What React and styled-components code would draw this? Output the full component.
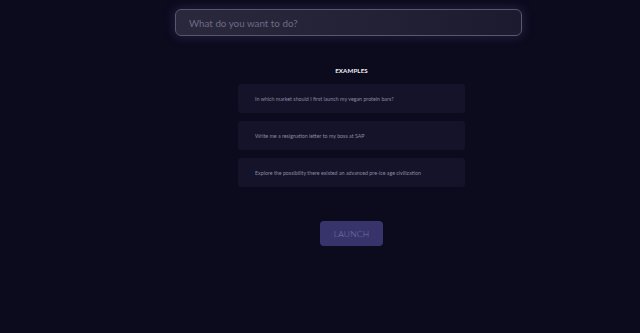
import React from "react";
import styled, { createGlobalStyle } from "styled-components";

const GlobalStyle = createGlobalStyle`
  html, body {
    margin: 0;
    padding: 0;
    background: #0c0a1d;
  }
  body {
    font-family: Lato, "Open Sans", "Liberation Sans", sans-serif;
  }
`;

const Page = styled.div`
  width: 640px;
  height: 333px;
  background: #0c0a1d;
  display: flex;
  flex-direction: column;
  align-items: center;
  padding-left: 63px;
  padding-top: 9px;
  box-sizing: border-box;
`;

const Prompt = styled.input`
  width: 347px;
  height: 27px;
  box-sizing: border-box;
  margin-left: -6px;
  border: 1px solid #59566f;
  border-radius: 6px;
  background: linear-gradient(90deg, #2a283d 0%, #232136 60%, #1c1a2f 100%);
  box-shadow: 0 0 10px 2px rgba(70, 64, 120, 0.35);
  padding: 0 13px;
  font-family: Lato, "Open Sans", sans-serif;
  font-size: 9.8px;
  color: #c8c6d8;
  outline: none;

  &::placeholder {
    color: #6e6b84;
  }
`;

const Title = styled.div`
  margin-top: 31px;
  font-size: 6.2px;
  line-height: 8px;
  font-weight: 700;
  color: #f2f1f8;
  letter-spacing: 0.1px;
`;

const List = styled.div`
  margin-top: 9px;
  display: flex;
  flex-direction: column;
  gap: 8px;
`;

const Card = styled.div`
  width: 227px;
  height: 29px;
  box-sizing: border-box;
  background: #151329;
  border-radius: 3px;
  display: flex;
  align-items: center;
  padding-left: 17px;
  font-size: 5.3px;
  color: #8b88a2;
  white-space: nowrap;
`;

const Launch = styled.button`
  margin-top: 34px;
  width: 63px;
  height: 25px;
  border: none;
  border-radius: 4px;
  background: #37346c;
  color: #7a77a6;
  font-family: Lato, "Open Sans", sans-serif;
  font-weight: 300;
  font-size: 8.5px;
  letter-spacing: 0.2px;
`;

const examples = [
  "In which market should I first launch my vegan protein bars?",
  "Write me a resignation letter to my boss at SAP",
  "Explore the possibility there existed an advanced pre-ice age civilization",
];

export default function App() {
  return (
    <>
      <GlobalStyle />
      <Page>
        <Prompt placeholder="What do you want to do?" />
        <Title>EXAMPLES</Title>
        <List>
          {examples.map((text) => (
            <Card key={text}>{text}</Card>
          ))}
        </List>
        <Launch>LAUNCH</Launch>
      </Page>
    </>
  );
}
